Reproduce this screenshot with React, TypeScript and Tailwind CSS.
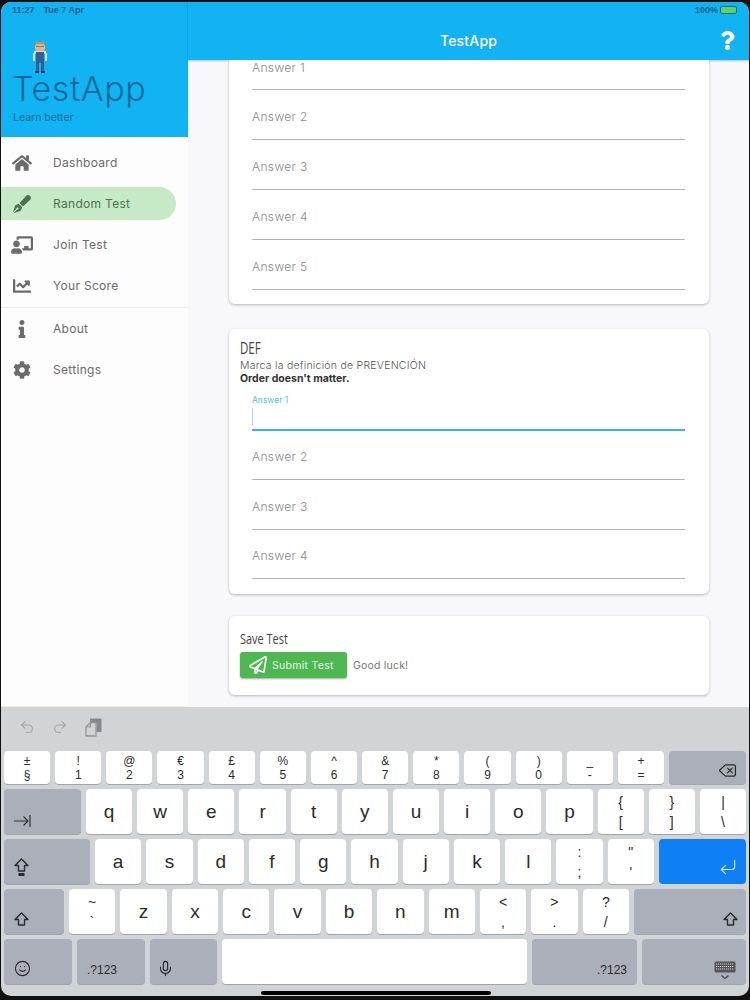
import React from 'react';
import { FaChalkboardTeacher, FaChartLine, FaCog, FaHome, FaInfo, FaPenFancy, FaQuestion, FaRegPaperPlane } from 'react-icons/fa';
import { CornerDownLeft, Delete, Mic, Redo2, Smile, Undo2 } from 'lucide-react';

const UI = "font-['Inter','Open_Sans',sans-serif]";
const KB = "font-['Liberation_Sans',Arial,sans-serif]";
const NARROW = "font-['Open_Sans',sans-serif]";

const navTop = [
  { label: 'Dashboard', icon: <FaHome size={20} /> },
  { label: 'Random Test', icon: <FaPenFancy size={18} />, active: true },
  { label: 'Join Test', icon: <FaChalkboardTeacher size={22} /> },
  { label: 'Your Score', icon: <FaChartLine size={18} /> },
];

const Avatar = () => (
  <svg width="14" height="32" viewBox="0 0 14 32">
    <rect x="3" y="0" width="8" height="2" fill="#c98f4e" />
    <rect x="2" y="2" width="10" height="7" rx="2" fill="#e7b184" />
    <rect x="3" y="4" width="8" height="1" fill="#6b7a80" />
    <rect x="1" y="9" width="12" height="3" fill="#d8dde0" />
    <rect x="0" y="11" width="2" height="8" fill="#d8dde0" />
    <rect x="12" y="11" width="2" height="8" fill="#d8dde0" />
    <rect x="3" y="10" width="8" height="11" fill="#2f5f95" />
    <rect x="3" y="21" width="3" height="8" fill="#2f5f95" />
    <rect x="8" y="21" width="3" height="8" fill="#2f5f95" />
    <rect x="2" y="29" width="4" height="2" fill="#3a3a3a" />
    <rect x="8" y="29" width="4" height="2" fill="#3a3a3a" />
  </svg>
);

const Sidebar = () => (
  <aside className={`flex w-[187px] shrink-0 flex-col bg-[#fdfdfd] ${UI}`}>
    <div className="h-[135px] bg-[#12b3f3] pl-[11px] pt-[40px] text-[#0c6a99]">
      <div className="pl-[21px]"><Avatar /></div>
      <div className="mt-[-3px] text-[34px] font-light leading-[36px] tracking-[0.6px]">TestApp</div>
      <div className="mt-[4px] pl-[1px] text-[10.5px] leading-[14px]">Learn better</div>
    </div>
    <nav className="pt-[5px]">
      {navTop.map((item) => (
        <div key={item.label} className={`flex h-[41px] items-center ${item.active ? 'text-[#4f7350]' : 'text-[#6b6b6b]'}`}>
          <div className={`flex h-[33px] w-[175px] items-center rounded-r-full ${item.active ? 'bg-[#c6e9c6]' : ''}`}>
            <span className="flex w-[52px] shrink-0 justify-center pr-[11px]">{item.icon}</span>
            <span className="text-[12px] tracking-[0.3px]">{item.label}</span>
          </div>
        </div>
      ))}
    </nav>
    <div className="mt-[1px] h-px bg-[#ededed]" />
    <div className="text-[#6b6b6b]">
      <div className="flex h-[41px] items-center">
        <span className="flex w-[52px] shrink-0 justify-center pr-[11px]"><FaInfo size={18} /></span>
        <span className="text-[12px] tracking-[0.3px]">About</span>
      </div>
      <div className="flex h-[41px] items-center">
        <span className="flex w-[52px] shrink-0 justify-center pr-[11px]"><FaCog size={18} /></span>
        <span className="text-[12px] tracking-[0.3px]">Settings</span>
      </div>
    </div>
  </aside>
);

const AnswerRow = ({ label, className = 'h-[50px]' }: { label: string; className?: string }) => (
  <div className={`flex items-center border-b border-[#b4b4b4] pt-[4px] text-[12px] font-light tracking-[0.35px] text-[#8a8a8a] ${className}`}>
    {label}
  </div>
);

const Card = ({ className = '', children }: { className?: string; children: React.ReactNode }) => (
  <section className={`rounded-[6px] bg-white shadow-[0_1px_3px_rgba(0,0,0,0.28)] ${className}`}>{children}</section>
);

const Content = () => (
  <div className={`relative flex min-w-0 flex-1 flex-col bg-[#f8f8fa] ${UI}`}>
    <header className="flex h-[58px] shrink-0 items-center justify-center bg-[#12b3f3] pt-[18px] shadow-[0_1px_2px_rgba(0,0,0,0.25)]">
      <span className="text-[14px] font-medium tracking-[0.2px] text-white">TestApp</span>
      <FaQuestion size={19} className="absolute right-[12px] top-[29px] text-white" />
    </header>
    <div className="min-h-0 flex-1 overflow-hidden pl-[41px] pr-[40px]">
      <Card className="rounded-t-none pl-[23px] pr-[24px] pb-[14px]">
        <div className="h-[30px] border-b border-[#b4b4b4] text-[12px] font-light leading-[15px] tracking-[0.35px] text-[#8a8a8a]">Answer 1</div>
        {['Answer 2', 'Answer 3', 'Answer 4', 'Answer 5'].map((a) => <AnswerRow key={a} label={a} />)}
      </Card>
      <Card className="mt-[25px] h-[265px] px-[11px] pt-[10px]">
        <h2 className={`origin-left scale-x-[0.72] text-[16px] leading-[18px] text-[#444] ${NARROW}`}>DEF</h2>
        <p className="mt-[2px] text-[10.5px] font-light leading-[13px] tracking-[0.25px] text-[#555]">Marca la definición de PREVENCIÓN</p>
        <p className="text-[10.5px] font-bold leading-[13px] text-[#333]">Order doesn't matter.</p>
        <div className="pl-[12px] pr-[13px]">
          <div className="mt-[10px] flex h-[36px] flex-col border-b-2 border-[#37b6dd]">
            <span className="text-[8.5px] leading-[11px] text-[#56c9b8]">Answer 1</span>
            <span className="mt-[2px] h-[17px] w-px bg-[#9fdcd4]" />
          </div>
          <AnswerRow label="Answer 2" className="h-[49px]" />
          <AnswerRow label="Answer 3" className="h-[50px]" />
          <AnswerRow label="Answer 4" className="h-[49px]" />
        </div>
      </Card>
      <Card className="mt-[22px] h-[79px] px-[11px] pt-[13px]">
        <h2 className={`origin-left scale-x-[0.73] text-[15px] leading-[18px] text-[#444] ${NARROW}`}>Save Test</h2>
        <div className="mt-[5px] flex items-center gap-[6px]">
          <button className="flex h-[26px] w-[107px] items-center gap-[5px] rounded-[3px] bg-[#4cb84f] pl-[9px] text-[10.5px] tracking-[0.3px] text-[#e9f7e9] shadow-[0_1px_2px_rgba(0,0,0,0.35)]">
            <FaRegPaperPlane size={18} className="text-white" />
            <span className="pt-[1px]">Submit Test</span>
          </button>
          <span className="pt-[1px] text-[10.5px] tracking-[0.2px] text-[#777]">Good luck!</span>
        </div>
      </Card>
    </div>
  </div>
);

const Key = ({ top, main, wide = false }: { top?: string; main: string; wide?: boolean }) => (
  <div className="flex min-w-0 flex-1 flex-col items-center justify-center rounded-[4px] bg-white text-[#2b2b2b] shadow-[0_1px_0_rgba(0,0,0,0.22)]">
    {top ? (
      <>
        <span className={wide ? 'text-[14px] leading-[20px]' : 'text-[12px] leading-[14px]'}>{top}</span>
        <span className={wide ? 'text-[14px] leading-[20px]' : 'text-[12px] leading-[14px]'}>{main}</span>
      </>
    ) : (
      <span className="text-[19px] leading-none">{main}</span>
    )}
  </div>
);

const Gray = ({ className = '', children }: { className?: string; children: React.ReactNode }) => (
  <div className={`flex shrink-0 rounded-[4px] bg-[#abafb9] text-[#2b2b2b] shadow-[0_1px_0_rgba(0,0,0,0.22)] ${className}`}>{children}</div>
);

const TabIcon = () => (
  <svg width="17" height="12" viewBox="0 0 17 12" fill="none" stroke="#333" strokeWidth="1.2">
    <path d="M0 6h14M9.5 1.5 14 6l-4.5 4.5M16 0v12" />
  </svg>
);

const ShiftIcon = () => (
  <svg width="15" height="14" viewBox="0 0 15 14" fill="none" stroke="#2b2b2b" strokeWidth="1.4" strokeLinejoin="round">
    <path d="M7.5 1 14 7.5h-3.5V13h-6V7.5H1z" />
  </svg>
);

const CapsIcon = () => (
  <svg width="15" height="19" viewBox="0 0 15 19" fill="none" stroke="#2b2b2b" strokeWidth="1.4" strokeLinejoin="round">
    <path d="M7.5 1 14 7.5h-3.5V13h-6V7.5H1z" />
    <path d="M4.5 16.5h6" strokeWidth="3" />
  </svg>
);

const PasteIcon = () => (
  <svg width="17" height="19" viewBox="0 0 17 19">
    <path d="M5 0.5h11a0.5 0.5 0 0 1 .5.5v13h-5V5H5z" fill="#85898d" />
    <path d="M5.5 4.5H11V18H1V9z" fill="#d1d4d7" stroke="#92969a" strokeWidth="1.3" strokeLinejoin="round" />
    <path d="M5.5 4.5V9H1" fill="none" stroke="#92969a" strokeWidth="1.1" />
  </svg>
);

const HideKeyboardIcon = () => (
  <svg width="22" height="19" viewBox="0 0 22 19">
    <rect x="0.5" y="0.5" width="21" height="11" rx="1.5" fill="#555" />
    <path d="M2 3h18M2 5.5h18M2 8h18" stroke="#c9ccd2" strokeWidth="1" strokeDasharray="1.2 0.8" />
    <path d="M7.5 14.5 11 17.5l3.5-3" fill="none" stroke="#444" strokeWidth="1.2" />
  </svg>
);

const numberRow: [string, string][] = [['±', '§'], ['!', '1'], ['@', '2'], ['€', '3'], ['£', '4'], ['%', '5'], ['^', '6'], ['&', '7'], ['*', '8'], ['(', '9'], [')', '0'], ['_', '-'], ['+', '=']];

const Keyboard = () => (
  <div className={`h-[289px] shrink-0 bg-[#d1d4d7] px-[3px] shadow-[0_-1px_0_rgba(0,0,0,0.06)] ${KB}`}>
    <div className="flex h-[44px] items-center gap-[17px] pb-[4px] pl-[15px] text-[#a0a4a8]">
      <Undo2 size={16} strokeWidth={1.6} />
      <Redo2 size={16} strokeWidth={1.6} />
      <PasteIcon />
    </div>
    <div className="flex flex-col gap-[5px]">
      <div className="flex h-[33px] gap-[5px]">
        {numberRow.map(([t, m]) => <Key key={m} top={t} main={m} />)}
        <Gray className="w-[77px] items-end justify-end pb-[4px] pr-[9px]"><Delete size={19} strokeWidth={1.6} /></Gray>
      </div>
      <div className="flex h-[45px] gap-[5px]">
        <Gray className="w-[77px] items-end pb-[7px] pl-[10px]"><TabIcon /></Gray>
        {'qwertyuiop'.split('').map((k) => <Key key={k} main={k} />)}
        <Key top="{" main="[" wide />
        <Key top="}" main="]" wide />
        <Key top="|" main="\" wide />
      </div>
      <div className="flex h-[45px] gap-[5px]">
        <Gray className="w-[86px] items-end pb-[7px] pl-[10px]"><CapsIcon /></Gray>
        {'asdfghjkl'.split('').map((k) => <Key key={k} main={k} />)}
        <Key top=":" main=";" wide />
        <Key top={'"'} main="'" wide />
        <div className="flex w-[87px] shrink-0 items-end justify-end rounded-[4px] bg-[#0f7ff5] pb-[7px] pr-[8px] text-[#cfe5fd]">
          <CornerDownLeft size={20} strokeWidth={1.4} />
        </div>
      </div>
      <div className="flex h-[45px] gap-[5px]">
        <Gray className="w-[60px] items-end pb-[8px] pl-[10px]"><ShiftIcon /></Gray>
        <Key top="~" main="`" wide />
        {'zxcvbnm'.split('').map((k) => <Key key={k} main={k} />)}
        <Key top="<" main="," wide />
        <Key top=">" main="." wide />
        <Key top="?" main="/" wide />
        <Gray className="w-[112px] items-end justify-end pb-[8px] pr-[8px]"><ShiftIcon /></Gray>
      </div>
      <div className="flex h-[45px] gap-[5px]">
        <Gray className="w-[68px] items-end pb-[7px] pl-[10px]"><Smile size={17} strokeWidth={1.6} /></Gray>
        <Gray className="w-[68px] items-end pb-[8px] pl-[10px] text-[12px] leading-none">.?123</Gray>
        <Gray className="w-[67px] items-end pb-[7px] pl-[7px]"><Mic size={17} strokeWidth={1.6} /></Gray>
        <div className="min-w-0 flex-1 rounded-[4px] bg-white shadow-[0_1px_0_rgba(0,0,0,0.22)]" />
        <Gray className="w-[105px] items-end justify-end pb-[8px] pr-[10px] text-[12px] leading-none">.?123</Gray>
        <Gray className="w-[104px] items-end justify-end pb-[4px] pr-[10px]"><HideKeyboardIcon /></Gray>
      </div>
    </div>
    <div className="mt-[7px] flex justify-center">
      <div className="ml-[2px] h-[4px] w-[230px] rounded-full bg-black" />
    </div>
  </div>
);

const StatusBar = () => (
  <div className={`absolute left-[11px] right-[12px] top-[2px] z-10 flex items-center justify-between text-[9px] font-bold leading-[12px] text-[#0e5f88] ${KB}`}>
    <div className="flex gap-[9px]">
      <span>11:27</span>
      <span>Tue 7 Apr</span>
    </div>
    <div className="flex items-center gap-[2px]">
      <span>100%</span>
      <span className="h-[8px] w-[17px] rounded-[2px] border border-[#0e6f9e] bg-[#5fd35f]" />
    </div>
  </div>
);

const App = () => (
  <div className="h-screen w-[750px] overflow-hidden bg-[#111] pl-[1px] pr-[1px] pt-[2px]">
    <div className="relative flex h-[994px] flex-col overflow-hidden rounded-[10px]">
      <StatusBar />
      <div className="flex min-h-0 flex-1">
        <Sidebar />
        <Content />
      </div>
      <Keyboard />
    </div>
  </div>
);

export default App;
